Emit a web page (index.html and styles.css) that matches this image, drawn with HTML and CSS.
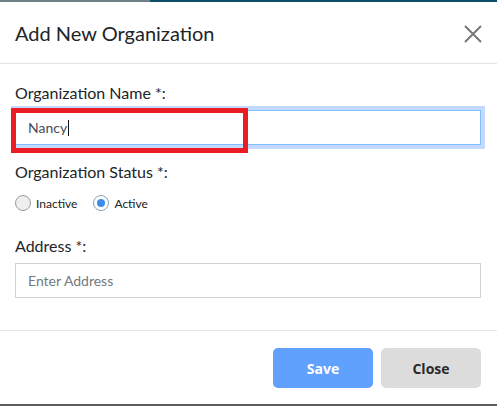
FILE: index.html
```html
<!DOCTYPE html>
<html lang="en">
<head>
<meta charset="utf-8">
<title>Add New Organization</title>
<link rel="stylesheet" href="styles.css">
</head>
<body>
<div class="backdrop-strip"></div>
<div class="modal">
  <div class="modal-header">
    <h5 class="modal-title">Add New Organization</h5>
    <button class="close-btn" aria-label="Close">
      <svg width="18" height="18" viewBox="0 0 18 18"><path d="M1 1 L17 17 M17 1 L1 17" stroke="#777" stroke-width="2" fill="none"/></svg>
    </button>
  </div>
  <div class="modal-body">
    <div class="form-group first">
      <label class="form-label">Organization Name *:</label>
      <div class="field-wrap">
        <div class="form-control focused"><span class="value">Nancy</span><span class="caret"></span></div>
        <div class="highlight"></div>
      </div>
    </div>
    <div class="form-group status">
      <label class="form-label">Organization Status *:</label>
      <div class="radio-row">
        <label class="radio"><span class="radio-dot"></span>Inactive</label>
        <label class="radio"><span class="radio-dot checked"></span>Active</label>
      </div>
    </div>
    <div class="form-group address">
      <label class="form-label">Address *:</label>
      <input class="form-control" type="text" placeholder="Enter Address">
    </div>
  </div>
  <div class="modal-footer">
    <button class="btn btn-save">Save</button>
    <button class="btn btn-close">Close</button>
  </div>
</div>
</body>
</html>
```
FILE: styles.css
```css
* { box-sizing: border-box; }
html, body { margin: 0; padding: 0; }
body {
  background: #5c5c5c;
  font-family: Lato, "Open Sans", sans-serif;
  color: #212529;
  width: 497px;
  height: 406px;
  overflow: hidden;
}
.backdrop-strip {
  height: 2px;
  background: linear-gradient(to right, #6f7f86 0, #6f7f86 150px, #0f4e69 150px);
}
.modal {
  background: #fff;
  height: 402px;
  display: flex;
  flex-direction: column;
}
.modal-header {
  height: 62px;
  border-bottom: 1px solid #e2e4e7;
  display: flex;
  align-items: center;
  justify-content: space-between;
  padding: 0 15px 0 15px;
}
.modal-title {
  margin: 0;
  font-size: 20px;
  font-weight: 400;
  line-height: 24px;
  padding-top: 1px;
}
.close-btn {
  border: 0;
  background: none;
  padding: 0;
  width: 18px;
  height: 18px;
  margin-top: 2px;
  display: flex;
}
.modal-body {
  padding: 18px 16px 32px 15px;
}
.form-label {
  display: block;
  font-size: 16px;
  line-height: 22px;
  margin-bottom: 6px;
}
.form-group.status { margin-top: 16px; }
.form-group.status .form-label { margin-bottom: 10px; }
.form-group.address { margin-top: 22px; }
.field-wrap { position: relative; }
.form-control {
  display: flex;
  align-items: center;
  width: 100%;
  height: 35px;
  border: 1px solid #ced4da;
  border-radius: 0;
  padding: 0 12px;
  font-family: Lato, sans-serif;
  font-size: 14px;
  color: #454d55;
  background: #fff;
  outline: none;
}
.form-control::placeholder { color: #737a80; }
.form-control.focused {
  border-color: #80bdff;
  box-shadow: 0 0 0 4px #c3dafe;
}
.caret {
  display: inline-block;
  width: 1px;
  height: 16px;
  background: #111;
  margin-left: 1px;
}
.highlight {
  position: absolute;
  left: -4px;
  top: -2px;
  width: 237px;
  height: 45px;
  border: 5px solid #ec1c24;
  pointer-events: none;
}
.radio-row {
  display: flex;
  align-items: center;
  gap: 16px;
  height: 20px;
}
.radio {
  display: flex;
  align-items: center;
  gap: 5px;
  font-size: 12px;
  color: #222;
}
.radio-dot {
  width: 16px;
  height: 16px;
  border-radius: 50%;
  border: 1px solid #9a9a9a;
  background: #efefef;
  display: flex;
  align-items: center;
  justify-content: center;
}
.radio-dot.checked {
  border-color: #8da0b8;
  background: #fff;
}
.radio-dot.checked::after {
  content: "";
  width: 8px;
  height: 8px;
  border-radius: 50%;
  background: #3a8ee9;
}
.modal-footer {
  border-top: 1px solid #e2e4e7;
  display: flex;
  justify-content: flex-end;
  gap: 8px;
  padding: 17px 16px 16px 0;
}
.btn {
  width: 100px;
  height: 40px;
  border: 0;
  border-radius: 5px;
  font-family: "Open Sans", sans-serif;
  font-weight: 700;
  font-size: 14px;
}
.btn-save { background: #60a1fe; color: #fff; }
.btn-close { background: #dcdcdc; color: #2a2a2a; }
```
